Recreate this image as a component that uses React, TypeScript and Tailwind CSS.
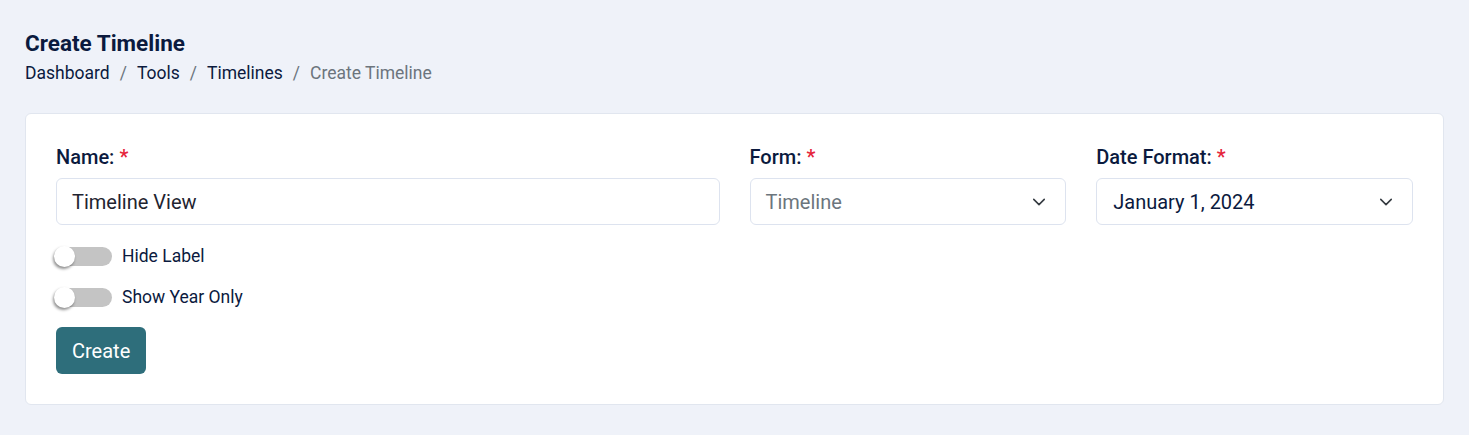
import React from "react";

function Chevron() {
  return (
    <svg width="14" height="14" viewBox="0 0 16 16" fill="none" className="shrink-0">
      <path d="M2 5l6 6 6-6" stroke="#343a40" strokeWidth="1.8" strokeLinecap="round" strokeLinejoin="round" />
    </svg>
  );
}

function Label({ children }: { children: React.ReactNode }) {
  return (
    <label className="mb-[9px] block text-[20px] font-medium leading-6 text-[#0b1a3e]">
      {children} <span className="text-[#e5243b]">*</span>
    </label>
  );
}

function Toggle({ label }: { label: string }) {
  return (
    <div className="flex h-[24px] items-center gap-[10px]">
      <div className="relative h-[19px] w-[56px] rounded-full bg-[#c4c4c4]">
        <div className="absolute left-[-2px] top-[-1px] h-[21px] w-[21px] rounded-full bg-white shadow-[-1px_2px_3px_rgba(0,0,0,0.45)]" />
      </div>
      <span className="text-[17.5px] text-[#0b1a3e]">{label}</span>
    </div>
  );
}

export default function App() {
  return (
    <div className="min-h-[435px] bg-[#eff2f9] px-[25px] pt-[30px] font-['Roboto',sans-serif]">
      <h1 className="text-[22.5px] font-bold leading-[26px] text-[#0b1a3e]">Create Timeline</h1>
      <nav className="mt-[5px] flex items-center text-[17.5px] leading-6 text-[#0b1a3e]">
        <span>Dashboard</span>
        <span className="px-[10px] text-[#6c757d]">/</span>
        <span>Tools</span>
        <span className="px-[10px] text-[#6c757d]">/</span>
        <span>Timelines</span>
        <span className="px-[10px] text-[#6c757d]">/</span>
        <span className="text-[#6c757d]">Create Timeline</span>
      </nav>

      <div className="mt-[28px] rounded-[6px] border border-[#e1e6ef] bg-white px-[30px] pb-[30px] pt-[31px]">
        <div className="grid grid-cols-12 gap-x-[30px]">
          <div className="col-span-6">
            <Label>Name:</Label>
            <div className="flex h-[47px] items-center rounded-[6px] border border-[#dde3ef] px-[15px] text-[20px] text-[#1f2430]">
              Timeline View
            </div>
          </div>
          <div className="col-span-3">
            <Label>Form:</Label>
            <div className="flex h-[47px] items-center justify-between rounded-[6px] border border-[#dde3ef] pl-[15px] pr-[19px] text-[20px] text-[#6c757d]">
              <span>Timeline</span>
              <Chevron />
            </div>
          </div>
          <div className="col-span-3">
            <Label>Date Format:</Label>
            <div className="flex h-[47px] items-center justify-between rounded-[6px] border border-[#dde3ef] pl-[16px] pr-[19px] text-[20px] text-[#0b1a3e]">
              <span>January 1, 2024</span>
              <Chevron />
            </div>
          </div>
        </div>

        <div className="mt-[19px] flex flex-col gap-[17px]">
          <Toggle label="Hide Label" />
          <Toggle label="Show Year Only" />
        </div>

        <button className="mt-[18px] h-[47px] rounded-[6px] bg-[#2e6e7b] px-[16px] text-[20px] text-white">
          Create
        </button>
      </div>
    </div>
  );
}
